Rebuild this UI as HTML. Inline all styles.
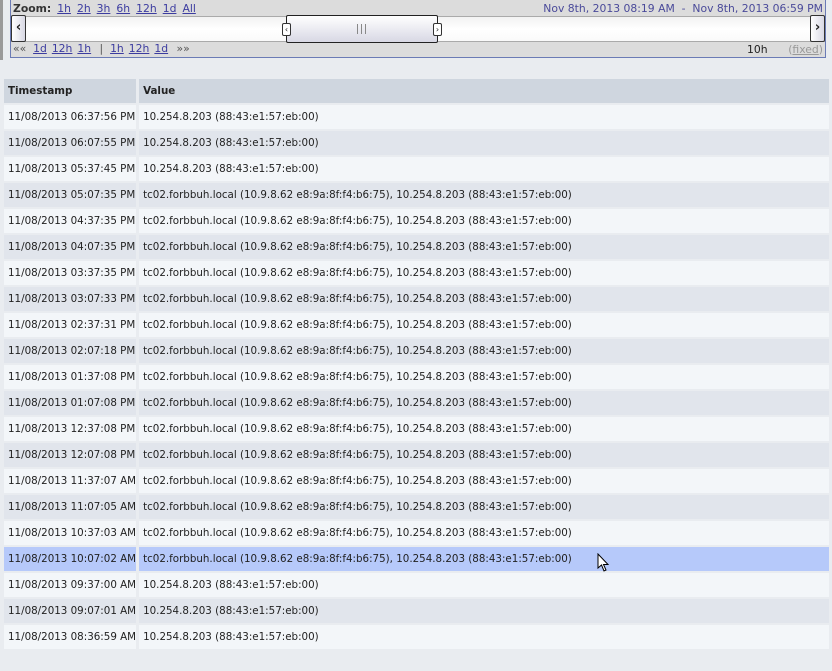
<!DOCTYPE html>
<html><head><style>
body{margin:0;width:832px;height:671px;background:#e9ecf0;font-family:"DejaVu Sans",Verdana,sans-serif;font-size:10.3px;color:#222;position:relative;overflow:hidden}
.lb{position:absolute;left:0;top:0;width:3px;height:60px;background:#9a9a9a}
.nav{position:absolute;left:10px;top:0;width:814px;height:57px;border:1px solid #6b7bb5;border-top:none;background:#dcdcdc;font-size:10.8px}
.nav a{color:#3c3ca0;text-decoration:underline;margin-right:6px}
.t1{position:absolute;left:2px;top:2px}
.t1 b{color:#333;margin-right:6px}
.t2{position:absolute;right:2px;top:2px;color:#4a4a9a}
.bar{position:absolute;left:0;top:16px;width:814px;height:26px;background:linear-gradient(#f2f2f2,#fff 50%,#fafafa);border-top:1px solid #aaa;border-bottom:1px solid #aaa;box-sizing:border-box}
.btn{position:absolute;top:15px;width:15px;height:27px;border:1px solid #333;border-radius:2px;background:linear-gradient(90deg,#fff,#d8d8e4);box-sizing:border-box;font-size:13px;font-weight:bold;text-align:center;line-height:24px}
.win{position:absolute;left:275px;top:15px;width:152px;height:28px;border:1px solid #222;border-radius:2px;background:linear-gradient(#fff,#d8d8e4);box-sizing:border-box}
.h{position:absolute;top:7px;width:7px;height:11px;border:1px solid #333;background:#fff;font-size:8px;line-height:11px;text-align:center;border-radius:2px}
.t3{position:absolute;left:2px;top:42px;color:#555}
.t3 a{margin-right:5px}
.t4{position:absolute;right:2px;top:43px}
table{position:absolute;left:1px;top:77px;border-collapse:separate;border-spacing:3px 2px;table-layout:fixed}
td,th{height:24px;padding:0 0 0 4px;text-align:left;white-space:nowrap;overflow:hidden}
th{background:#cfd6df;font-weight:bold;color:#222}
th.a,td.a{width:128px}
th.b,td.b{width:688px}
tr:nth-child(even) td{background:#f3f6f9}
tr:nth-child(odd) td{background:#e1e5ec}
tr.sel td{background:#b6c9fa}
</style></head><body>
<div class="lb"></div>
<div class="nav">
<div class="t1"><b>Zoom:</b><a>1h</a><a>2h</a><a>3h</a><a>6h</a><a>12h</a><a>1d</a><a>All</a></div>
<div class="t2">Nov 8th, 2013 08:19 AM &nbsp;-&nbsp; Nov 8th, 2013 06:59 PM</div>
<div class="bar"></div>
<div class="btn" style="left:0">&lsaquo;</div>
<div class="btn" style="right:0">&rsaquo;</div>
<div class="win"><div class="h" style="left:-5px">&lsaquo;</div><div style="position:absolute;left:70px;top:8px;width:7px;height:10px;border-left:1px solid #888;border-right:1px solid #888"><div style="margin:0 auto;width:1px;height:10px;background:#888"></div></div><div class="h" style="right:-5px">&rsaquo;</div></div>
<div class="t3">«« &nbsp;<a>1d</a><a>12h</a><a>1h</a> | &nbsp;<a>1h</a><a>12h</a><a>1d</a> »»</div>
<div class="t4">10h &nbsp; &nbsp; &nbsp;<span style="color:#999">(<u>fixed</u>)</span></div>
</div>
<table>
<tr><th class="a">Timestamp</th><th class="b">Value</th></tr>
<tr><td class="a">11/08/2013 06:37:56 PM</td><td class="b">10.254.8.203 (88:43:e1:57:eb:00)</td></tr>
<tr><td class="a">11/08/2013 06:07:55 PM</td><td class="b">10.254.8.203 (88:43:e1:57:eb:00)</td></tr>
<tr><td class="a">11/08/2013 05:37:45 PM</td><td class="b">10.254.8.203 (88:43:e1:57:eb:00)</td></tr>
<tr><td class="a">11/08/2013 05:07:35 PM</td><td class="b">tc02.forbbuh.local (10.9.8.62 e8:9a:8f:f4:b6:75), 10.254.8.203 (88:43:e1:57:eb:00)</td></tr>
<tr><td class="a">11/08/2013 04:37:35 PM</td><td class="b">tc02.forbbuh.local (10.9.8.62 e8:9a:8f:f4:b6:75), 10.254.8.203 (88:43:e1:57:eb:00)</td></tr>
<tr><td class="a">11/08/2013 04:07:35 PM</td><td class="b">tc02.forbbuh.local (10.9.8.62 e8:9a:8f:f4:b6:75), 10.254.8.203 (88:43:e1:57:eb:00)</td></tr>
<tr><td class="a">11/08/2013 03:37:35 PM</td><td class="b">tc02.forbbuh.local (10.9.8.62 e8:9a:8f:f4:b6:75), 10.254.8.203 (88:43:e1:57:eb:00)</td></tr>
<tr><td class="a">11/08/2013 03:07:33 PM</td><td class="b">tc02.forbbuh.local (10.9.8.62 e8:9a:8f:f4:b6:75), 10.254.8.203 (88:43:e1:57:eb:00)</td></tr>
<tr><td class="a">11/08/2013 02:37:31 PM</td><td class="b">tc02.forbbuh.local (10.9.8.62 e8:9a:8f:f4:b6:75), 10.254.8.203 (88:43:e1:57:eb:00)</td></tr>
<tr><td class="a">11/08/2013 02:07:18 PM</td><td class="b">tc02.forbbuh.local (10.9.8.62 e8:9a:8f:f4:b6:75), 10.254.8.203 (88:43:e1:57:eb:00)</td></tr>
<tr><td class="a">11/08/2013 01:37:08 PM</td><td class="b">tc02.forbbuh.local (10.9.8.62 e8:9a:8f:f4:b6:75), 10.254.8.203 (88:43:e1:57:eb:00)</td></tr>
<tr><td class="a">11/08/2013 01:07:08 PM</td><td class="b">tc02.forbbuh.local (10.9.8.62 e8:9a:8f:f4:b6:75), 10.254.8.203 (88:43:e1:57:eb:00)</td></tr>
<tr><td class="a">11/08/2013 12:37:08 PM</td><td class="b">tc02.forbbuh.local (10.9.8.62 e8:9a:8f:f4:b6:75), 10.254.8.203 (88:43:e1:57:eb:00)</td></tr>
<tr><td class="a">11/08/2013 12:07:08 PM</td><td class="b">tc02.forbbuh.local (10.9.8.62 e8:9a:8f:f4:b6:75), 10.254.8.203 (88:43:e1:57:eb:00)</td></tr>
<tr><td class="a">11/08/2013 11:37:07 AM</td><td class="b">tc02.forbbuh.local (10.9.8.62 e8:9a:8f:f4:b6:75), 10.254.8.203 (88:43:e1:57:eb:00)</td></tr>
<tr><td class="a">11/08/2013 11:07:05 AM</td><td class="b">tc02.forbbuh.local (10.9.8.62 e8:9a:8f:f4:b6:75), 10.254.8.203 (88:43:e1:57:eb:00)</td></tr>
<tr><td class="a">11/08/2013 10:37:03 AM</td><td class="b">tc02.forbbuh.local (10.9.8.62 e8:9a:8f:f4:b6:75), 10.254.8.203 (88:43:e1:57:eb:00)</td></tr>
<tr class="sel"><td class="a">11/08/2013 10:07:02 AM</td><td class="b">tc02.forbbuh.local (10.9.8.62 e8:9a:8f:f4:b6:75), 10.254.8.203 (88:43:e1:57:eb:00)</td></tr>
<tr><td class="a">11/08/2013 09:37:00 AM</td><td class="b">10.254.8.203 (88:43:e1:57:eb:00)</td></tr>
<tr><td class="a">11/08/2013 09:07:01 AM</td><td class="b">10.254.8.203 (88:43:e1:57:eb:00)</td></tr>
<tr><td class="a">11/08/2013 08:36:59 AM</td><td class="b">10.254.8.203 (88:43:e1:57:eb:00)</td></tr>
</table>
<svg style="position:absolute;left:597px;top:553px" width="14" height="20"><path d="M1 1 L1 15 L4.5 12 L7 18 L9 17 L6.5 11.5 L11 11.5 Z" fill="#fff" stroke="#000" stroke-width="1"/></svg>
</body></html>
